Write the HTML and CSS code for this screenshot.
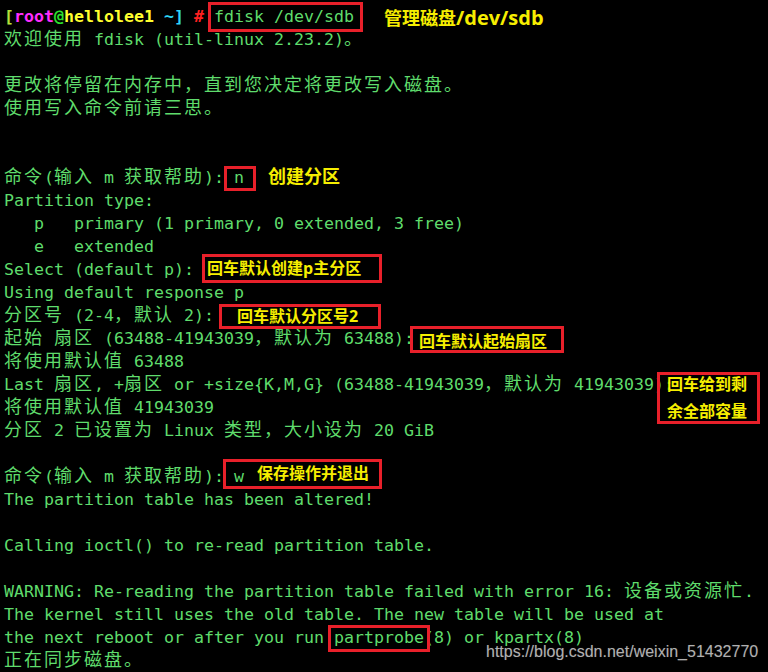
FILE: index.html
```html
<!DOCTYPE html>
<html lang="zh-CN">
<head>
<meta charset="utf-8">
<title>fdisk /dev/sdb</title>
<link rel="stylesheet" href="styles.css">
</head>
<body>
<div class="screen">
  <div class="term">
    <div class="ln"><span class="prompt"><span class="pb">[</span><span class="pu">root</span><span class="pa">@</span><span class="ph">hellolee1</span> <span class="pt">~]</span> <span class="pr">#</span></span> fdisk /dev/sdb</div>
    <div class="ln"><span class="c">欢迎使用</span> fdisk (util-linux 2.23.2)<span class="c">。</span></div>
    <div class="ln"></div>
    <div class="ln"><span class="c">更改将停留在内存中，直到您决定将更改写入磁盘。</span></div>
    <div class="ln"><span class="c">使用写入命令前请三思。</span></div>
    <div class="ln"></div>
    <div class="ln"></div>
    <div class="ln"><span class="c">命令</span>(<span class="c">输入</span> m <span class="c">获取帮助</span>): n</div>
    <div class="ln">Partition type:</div>
    <div class="ln">   p   primary (1 primary, 0 extended, 3 free)</div>
    <div class="ln">   e   extended</div>
    <div class="ln">Select (default p): </div>
    <div class="ln">Using default response p</div>
    <div class="ln"><span class="c">分区号</span> (2-4<span class="c">，默认</span> 2): </div>
    <div class="ln"><span class="c">起始</span> <span class="c">扇区</span> (63488-41943039<span class="c">，默认为</span> 63488):</div>
    <div class="ln"><span class="c">将使用默认值</span> 63488</div>
    <div class="ln">Last <span class="c">扇区</span>, +<span class="c">扇区</span> or +size{K,M,G} (63488-41943039<span class="c">，默认为</span> 41943039):</div>
    <div class="ln"><span class="c">将使用默认值</span> 41943039</div>
    <div class="ln"><span class="c">分区</span> 2 <span class="c">已设置为</span> Linux <span class="c">类型，大小设为</span> 20 GiB</div>
    <div class="ln"></div>
    <div class="ln"><span class="c">命令</span>(<span class="c">输入</span> m <span class="c">获取帮助</span>): w</div>
    <div class="ln">The partition table has been altered!</div>
    <div class="ln"></div>
    <div class="ln">Calling ioctl() to re-read partition table.</div>
    <div class="ln"></div>
    <div class="ln">WARNING: Re-reading the partition table failed with error 16: <span class="c">设备或资源忙</span>.</div>
    <div class="ln">The kernel still uses the old table. The new table will be used at</div>
    <div class="ln">the next reboot or after you run partprobe(8) or kpartx(8)</div>
    <div class="ln"><span class="c">正在同步磁盘。</span></div>
  </div>

  <div class="box b1"></div>
  <div class="box b2"></div>
  <div class="box b3"></div>
  <div class="box b4"></div>
  <div class="box b5"></div>
  <div class="box b6"></div>
  <div class="box b7"></div>
  <div class="box b8"></div>

  <div class="note n1">管理磁盘<span class="lat">/dev/sdb</span></div>
  <div class="note n2">创建分区</div>
  <div class="note n3">回车默认创建<span class="lat">p</span>主分区</div>
  <div class="note n4">回车默认分区号<span class="lat">2</span></div>
  <div class="note n5">回车默认起始扇区</div>
  <div class="note n6">回车给到剩<br>余全部容量</div>
  <div class="note n7">保存操作并退出</div>

  <div class="mark">https://blog.csdn.net/weixin_51432770</div>
</div>
</body>
</html>
```

FILE: styles.css
```css
html, body {
  margin: 0;
  padding: 0;
  background: #000;
}

.screen {
  position: relative;
  width: 768px;
  height: 672px;
  overflow: hidden;
  background: #000;
}

.term {
  padding: 5px 0 0 4px;
  font-family: "DejaVu Sans Mono", "Liberation Mono", monospace;
  font-size: 16.61px;
  color: #5fdc6c;
}

.ln {
  height: 23px;
  line-height: 23px;
  white-space: pre;
}

.c {
  font-family: "Noto Sans CJK SC", sans-serif;
  font-size: 18px;
  letter-spacing: 2px;
  line-height: 1;
}

.prompt { font-weight: bold; }
.pb { color: #b4e23a; }
.pu { color: #ff2cff; }
.pa { color: #2ee02e; }
.ph { color: #ffff2e; }
.pt { color: #2ed6f6; }
.pr { color: #ff2020; }

.box {
  position: absolute;
  box-sizing: border-box;
  border: 3px solid #e8202a;
}
.b1 { left: 208px; top: 2px;   width: 155px; height: 30px; }
.b2 { left: 224px; top: 166px; width: 32px;  height: 25px; }
.b3 { left: 202px; top: 254px; width: 180px; height: 29px; }
.b4 { left: 219px; top: 304px; width: 162px; height: 25px; }
.b5 { left: 410px; top: 326px; width: 154px; height: 27px; }
.b6 { left: 657px; top: 372px; width: 103px; height: 52px; }
.b7 { left: 223px; top: 459px; width: 159px; height: 30px; }
.b8 { left: 328px; top: 625px; width: 102px; height: 27px; }

.note {
  position: absolute;
  font-family: "Noto Sans CJK SC", sans-serif;
  font-weight: bold;
  font-size: 16px;
  line-height: 16px;
  color: #f6ee00;
  white-space: nowrap;
}
.note .lat {
  font-family: "Open Sans", "Noto Sans", sans-serif;
  font-weight: bold;
}
.n1 { left: 384px; top: 8px;   font-size: 18px; line-height: 18px; }
.n1 .lat { font-size: 20px; }
.n2 { left: 268px; top: 166px; font-size: 18px; line-height: 18px; }
.n3 { left: 207px; top: 259px; }
.n4 { left: 237px; top: 307px; }
.n5 { left: 419px; top: 332px; }
.n6 { left: 667px; top: 370px; line-height: 27px; }
.n7 { left: 257px; top: 464px; }

.mark {
  position: absolute;
  left: 486px;
  top: 643px;
  font-family: "Liberation Sans", Arial, sans-serif;
  font-size: 16px;
  line-height: 18px;
  color: #b0b0b0;
  text-shadow: 0 0 1px #333;
  white-space: nowrap;
}
```
